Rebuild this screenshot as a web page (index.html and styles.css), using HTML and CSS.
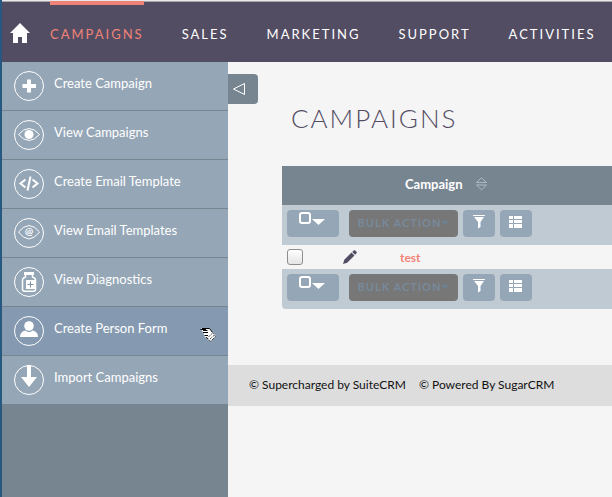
FILE: index.html
```
<!DOCTYPE html>
<html lang="en">
<head>
    <meta charset="UTF-8">
    <meta name="viewport" content="width=device-width, initial-scale=1.0">
    <title>Campaigns</title>
    <link rel="stylesheet" href="styles.css">
</head>
<body>
    <header class="navbar">
        <a class="home" href="#" aria-label="Home">
            <svg width="20" height="20" viewBox="0 0 20 20"><path fill="#fff" d="M10 0 L20 10 H17 V20 H12 V14 H8 V20 H3 V10 H0 Z"/></svg>
        </a>
        <nav class="tabs">
            <a class="active" href="#">CAMPAIGNS</a>
            <a href="#">SALES</a>
            <a href="#">MARKETING</a>
            <a href="#">SUPPORT</a>
            <a href="#">ACTIVITIES</a>
        </nav>
    </header>

    <div class="page">
        <aside class="sidebar">
            <ul>
                <li><a href="#">
                    <svg width="30" height="30" viewBox="0 0 30 30"><circle class="ring" cx="15" cy="15" r="14.500"/><path fill="#fff" d="M13 8.500h4v4.500h5v4h-5v4.500h-4V17H8.500v-4H13z"/></svg>
                    <span>Create Campaign</span>
                </a></li>
                <li><a href="#">
                    <svg width="30" height="30" viewBox="0 0 30 30"><circle class="ring" cx="15" cy="15" r="14.500"/><path class="ring" d="M4.500 14.500Q15 2.500 25.500 14.500Q15 26.500 4.500 14.500z"/><circle fill="#fff" cx="15" cy="14.500" r="4.500"/></svg>
                    <span>View Campaigns</span>
                </a></li>
                <li><a href="#">
                    <svg width="30" height="30" viewBox="0 0 30 30"><circle class="ring" cx="15" cy="15" r="14.500"/><path fill="none" stroke="#fff" stroke-width="2" d="M11.500 10.500L6.500 14.500L11.500 18.500M18.500 10.500L23.500 14.500L18.500 18.500M16.500 7.500L13.500 21.500"/></svg>
                    <span>Create Email Template</span>
                </a></li>
                <li><a href="#">
                    <svg width="30" height="30" viewBox="0 0 30 30"><circle class="ring" cx="15" cy="15" r="14.500"/><path class="ring" d="M4.500 14Q9 8 15 7.500Q21 8 25.500 14Q21 20.500 15 21Q9 20.500 4.500 14z"/><text class="at" x="15" y="17" text-anchor="middle">@</text></svg>
                    <span>View Email Templates</span>
                </a></li>
                <li><a href="#">
                    <svg width="30" height="30" viewBox="0 0 30 30"><circle class="ring" cx="15" cy="15" r="14.500"/><path fill="#fff" d="M10 5h10v3H10z"/><path fill="none" stroke="#fff" stroke-width="1.500" d="M11.500 8v2Q8.500 11 8.500 13v9.500Q8.500 24.200 10.500 24.200h9Q21.500 24.200 21.500 22.500V13Q21.500 11 18.500 10V8"/><path fill="#fff" d="M12 13h9v9h-9z"/><path stroke="#7f91a2" d="M16.500 14.500v6M13.500 17.500h6"/></svg>
                    <span>View Diagnostics</span>
                </a></li>
                <li class="hover"><a href="#">
                    <svg width="30" height="30" viewBox="0 0 30 30"><circle class="ring" cx="15" cy="15" r="14.500"/><circle fill="#fff" cx="15" cy="10" r="4.800"/><path fill="#fff" d="M6 21Q6 15.500 11.500 14.500Q15 17.500 18.500 14.500Q24 15.500 24 21z"/></svg>
                    <span>Create Person Form</span>
                </a>
                <svg class="pointer" width="18" height="16" viewBox="0 0 18 16"><path fill="#fff" d="M1 1.500H9.500L16 9L10.500 14.500L4.500 9.500L3.500 6L1 2.500z"/><path fill="none" stroke="#000" d="M2 1.500H9.500L12.500 5.500M.5 2.500H6M3 3.500H7.500M3 5.500H8M4.500 8.500H8M6 10.500L8 11.500"/><path fill="none" stroke="#000" stroke-dasharray="1 1" d="M8 11.500L10.500 14.500L15.500 9.500L12.500 5.500M8.500 10L12 6.500M10 12L14 8.500"/></svg>
                </li>
                <li><a href="#">
                    <svg width="30" height="30" viewBox="0 0 30 30"><circle class="ring" cx="15" cy="15" r="14.500"/><path fill="#fff" d="M13 0h4v12h6l-8 10l-8-10h6z"/></svg>
                    <span>Import Campaigns</span>
                </a></li>
            </ul>
        </aside>

        <main class="content">
            <button class="toggle" type="button" aria-label="Collapse sidebar">
                <svg width="14" height="14" viewBox="0 0 14 14"><path fill="none" stroke="#fff" d="M1.500 7L12.500 1.500V12.500z"/></svg>
            </button>
            <h1>CAMPAIGNS</h1>

            <table class="list">
                <colgroup>
                    <col class="col-check">
                    <col class="col-edit">
                    <col>
                </colgroup>
                <thead>
                    <tr>
                        <th></th>
                        <th></th>
                        <th class="name"><a href="#">Campaign
                            <svg width="11" height="14" viewBox="0 0 11 14"><path fill="none" stroke="#aebbc5" d="M.5 5.500L5.500 .7L10.500 5.500zM.5 8L5.500 12.800L10.500 8z"/></svg>
                        </a></th>
                    </tr>
                </thead>
                <tbody>
                    <tr class="actions">
                        <td colspan="3">
                            <div class="bar">
                                <button class="btn select" type="button" aria-label="Select">
                                    <svg width="26" height="14" viewBox="0 0 26 14"><rect x="1" y="1" width="10" height="10" rx="2" fill="none" stroke="#fff" stroke-width="2"/><path fill="#fff" d="M13 7h13l-6.500 6z"/></svg>
                                </button>
                                <button class="btn bulk" type="button" disabled>BULK ACTION<svg width="8" height="4" viewBox="0 0 8 4"><path fill="#6f8294" d="M0 0h8L4 4z"/></svg></button>
                                <button class="btn" type="button" aria-label="Filter">
                                    <svg width="12" height="14" viewBox="0 0 12 14"><path fill="#fff" d="M0 0h12v1H0zM1 2h10L7.500 7V12L5 13.500V7z"/></svg>
                                </button>
                                <button class="btn" type="button" aria-label="Choose columns">
                                    <svg width="14" height="14" viewBox="0 0 14 14"><path fill="#fff" d="M0 1h4v3H0zM5 1h8v3H5zM0 5h4v3H0zM5 5h8v3H5zM0 9h4v4H0zM5 9h8v4H5z"/></svg>
                                </button>
                            </div>
                        </td>
                    </tr>
                    <tr class="record">
                        <td class="check"><input type="checkbox" aria-label="Select test"></td>
                        <td class="edit"><a href="#" aria-label="Edit">
                            <svg width="14" height="14" viewBox="0 0 14 14"><path fill="#534d64" d="M0 14L1.300 9.800L8.500 2.500L11.500 5.500L4.200 12.700zM9.200 1.900L10.700 .5Q11.500 -.2 12.300 .6L13.500 1.800Q14.200 2.600 13.500 3.300L12.100 4.800z"/></svg>
                        </a></td>
                        <td class="name"><a href="#">test</a></td>
                    </tr>
                    <tr class="actions last">
                        <td colspan="3">
                            <div class="bar">
                                <button class="btn select" type="button" aria-label="Select">
                                    <svg width="26" height="14" viewBox="0 0 26 14"><rect x="1" y="1" width="10" height="10" rx="2" fill="none" stroke="#fff" stroke-width="2"/><path fill="#fff" d="M13 7h13l-6.500 6z"/></svg>
                                </button>
                                <button class="btn bulk" type="button" disabled>BULK ACTION<svg width="8" height="4" viewBox="0 0 8 4"><path fill="#6f8294" d="M0 0h8L4 4z"/></svg></button>
                                <button class="btn" type="button" aria-label="Filter">
                                    <svg width="12" height="14" viewBox="0 0 12 14"><path fill="#fff" d="M0 0h12v1H0zM1 2h10L7.500 7V12L5 13.500V7z"/></svg>
                                </button>
                                <button class="btn" type="button" aria-label="Choose columns">
                                    <svg width="14" height="14" viewBox="0 0 14 14"><path fill="#fff" d="M0 1h4v3H0zM5 1h8v3H5zM0 5h4v3H0zM5 5h8v3H5zM0 9h4v4H0zM5 9h8v4H5z"/></svg>
                                </button>
                            </div>
                        </td>
                    </tr>
                </tbody>
            </table>

            <footer>
                <a href="#">© Supercharged by SuiteCRM</a>
                <a href="#">© Powered By SugarCRM</a>
            </footer>
        </main>
    </div>
</body>
</html>
```
FILE: styles.css
```
* {
    box-sizing: border-box;
}
body {
    margin: 0;
    min-height: 100vh;
    display: flex;
    flex-direction: column;
    overflow-x: hidden;
    font-family: Lato, sans-serif;
    font-size: 13px;
    background-color: #f5f5f5;
    border-left: 2px solid #275880;
}
a {
    text-decoration: none;
}
svg {
    display: block;
    flex: none;
}
.navbar {
    display: flex;
    height: 62px;
    padding-left: 8px;
    background-color: #534d64;
    border-top: 1px solid #e8e8e8;
    box-shadow: inset 0 1px 0 #a9a9ad;
}
.home {
    width: 40px;
    padding-top: 22px;
}
.tabs {
    display: flex;
    gap: 38px;
}
.tabs a {
    padding-top: 20px;
    border-top: 4px solid transparent;
    color: #fff;
    font-size: 13px;
    line-height: 18px;
    letter-spacing: 2px;
}
.tabs .active {
    color: #f08377;
    border-top-color: #f08377;
}
.page {
    display: flex;
    flex: 1;
}
.sidebar {
    flex: none;
    width: 226px;
    background-color: #778591;
}
.sidebar ul {
    list-style: none;
    margin: 0;
    padding: 0;
}
.sidebar li {
    position: relative;
    background-color: #95a6b6;
    border-bottom: 1px solid #778591;
}
.sidebar li.hover {
    background-color: #859ab0;
}
.sidebar li a {
    display: flex;
    gap: 10px;
    height: 48px;
    padding: 9px 12px;
    color: #fff;
    line-height: 24px;
}
.ring {
    fill: none;
    stroke: #fff;
}
.at {
    fill: #fff;
    font-size: 10px;
    font-weight: bold;
}
.pointer {
    position: absolute;
    right: 10px;
    top: 20px;
}
.content {
    flex: 1;
    min-width: 0;
}
.toggle {
    display: flex;
    align-items: center;
    width: 30px;
    height: 30px;
    margin-top: 12px;
    padding: 0 4px;
    border: none;
    border-radius: 0 4px 4px 0;
    background-color: #778591;
}
h1 {
    margin: 0 0 34px 63px;
    color: #534d64;
    font-size: 26px;
    font-weight: 300;
    line-height: 28px;
    letter-spacing: 2px;
}
.list {
    width: calc(100% - 54px);
    margin-left: 54px;
    table-layout: fixed;
    border-collapse: collapse;
}
.list th,
.list td {
    padding: 0;
    text-align: left;
}
.list thead tr {
    height: 39px;
    background-color: #778591;
}
.col-check {
    width: 56px;
}
.col-edit {
    width: 52px;
}
.list th.name {
    padding: 0 0 4px 15px;
}
.list th a {
    display: flex;
    align-items: center;
    gap: 13px;
    color: #fff;
    font-weight: bold;
}
.actions td {
    height: 40px;
    background-color: #bfcad3;
}
.last td {
    border-radius: 0 0 0 4px;
}
.bar {
    display: flex;
    gap: 5px;
    height: 40px;
    padding: 5px;
}
.btn {
    display: flex;
    justify-content: center;
    width: 32px;
    height: 27px;
    padding: 5px 0;
    border: none;
    border-radius: 4px;
    background-color: #95a6b6;
    font-family: inherit;
}
.select {
    width: 52px;
    padding-top: 2px;
    padding-right: 2px;
    margin-right: 5px;
}
.bulk {
    align-items: center;
    width: 109px;
    padding: 2px 0 4px;
    background-color: #777;
    color: #778a9c;
    font-size: 11px;
    font-weight: bold;
    letter-spacing: 1px;
    line-height: 16px;
}
.record {
    height: 24px;
}
.list .check {
    padding-left: 5px;
}
.list .edit {
    padding-left: 5px;
}
.list td.name {
    padding-left: 10px;
}
.record .name a {
    display: block;
    color: #f08377;
    font-size: 12px;
    font-weight: bold;
}
input[type="checkbox"] {
    display: block;
    appearance: none;
    width: 16px;
    height: 16px;
    margin: 0;
    border: 1px solid #8e8f8c;
    border-radius: 3px;
    background: linear-gradient(#fff, #e4e4e4);
}
footer {
    display: flex;
    gap: 13px;
    margin-top: 56px;
    padding: 9px 21px 11px;
    background-color: #ddd;
    font-size: 12px;
    line-height: 21px;
}
footer a {
    color: #111;
}
```
